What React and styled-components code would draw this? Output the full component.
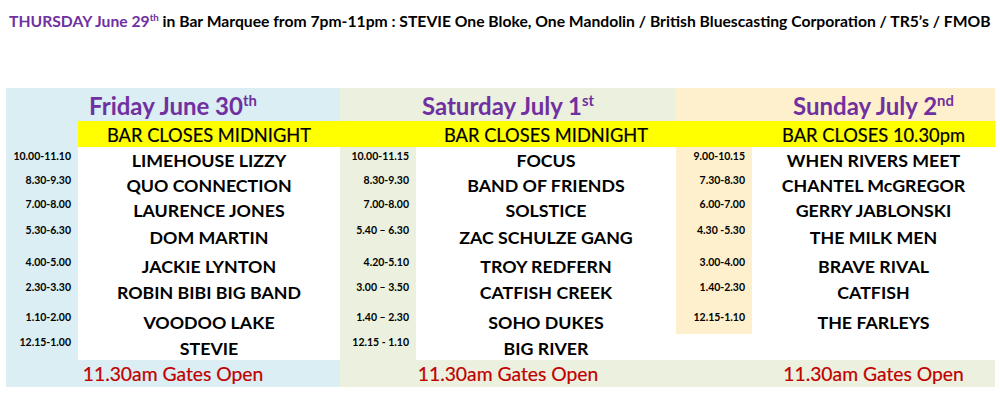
import React from 'react';
import styled, { createGlobalStyle } from 'styled-components';

const ROW_HEIGHTS = [25, 25, 25, 27, 29, 26, 30, 26];
const TIME_OFFSETS = [3, 2, 1, 2, 7, 3, 7, 2];

const GlobalStyle = createGlobalStyle`
  body {
    margin: 0;
    background: #ffffff;
    font-family: Lato, 'Liberation Sans', sans-serif;
    color: #000000;
  }
`;

const Page = styled.div`
  width: 1000px;
  height: 401px;
  padding: 12px 0 0 6px;
  box-sizing: border-box;
`;

const Headline = styled.div`
  padding-left: 3px;
  font-size: 15.7px;
  font-weight: 700;
  line-height: 18px;
  white-space: nowrap;
`;

const Purple = styled.span`
  color: #7030a0;
`;

const Sup = styled.sup`
  font-size: 0.62em;
  line-height: 0;
  vertical-align: 0.6em;
`;

const Schedule = styled.div`
  display: flex;
  margin-top: 58px;
`;

const Day = styled.div`
  display: grid;
  grid-template-columns: ${p => p.$timeWidth}px ${p => p.$bandWidth}px;
  grid-template-rows: 33px 26px ${ROW_HEIGHTS.map(h => h + 'px').join(' ')} 27px;
  background: ${p => p.$bg};
`;

const Title = styled.div`
  grid-column: 1 / -1;
  display: flex;
  align-items: center;
  justify-content: center;
  padding: 2px 0 0 ${p => p.$indent}px;
  font-size: 24px;
  font-weight: 700;
  line-height: 28px;
  color: #7030a0;
`;

const ClosingGap = styled.div`
  background: ${p => (p.$yellow ? '#ffff00' : 'transparent')};
`;

const Closing = styled.div`
  background: #ffff00;
  display: flex;
  align-items: center;
  justify-content: center;
  padding-top: 1px;
  font-size: 18.3px;
  line-height: 20px;
  -webkit-text-stroke: 0.2px #000;
`;

const Time = styled.div`
  padding: ${p => p.$top}px 7px 0 0;
  text-align: right;
  font-size: 10.5px;
  font-weight: 700;
  line-height: 12px;
  white-space: nowrap;
  background: ${p => (p.$blank ? '#ffffff' : 'transparent')};
`;

const Band = styled.div`
  background: #ffffff;
  display: flex;
  align-items: flex-end;
  justify-content: center;
  padding-bottom: 2px;
  font-size: 17.8px;
  font-weight: 700;
  line-height: 20px;
  white-space: nowrap;
`;

const Gates = styled.div`
  grid-column: 1 / -1;
  display: flex;
  align-items: center;
  justify-content: center;
  padding-left: ${p => p.$indent}px;
  background: ${p => p.$bg || 'transparent'};
  color: #c00000;
  font-size: 19.3px;
  line-height: 20px;
  -webkit-text-stroke: 0.2px #c00000;
`;

const days = [
  {
    title: 'Friday June 30',
    sup: 'th',
    bg: '#daeef3',
    timeWidth: 72,
    bandWidth: 262,
    closing: 'BAR CLOSES MIDNIGHT',
    yellowGap: false,
    indent: 0,
    acts: [
      ['10.00-11.10', 'LIMEHOUSE LIZZY'],
      ['8.30-9.30', 'QUO CONNECTION'],
      ['7.00-8.00', 'LAURENCE JONES'],
      ['5.30-6.30', 'DOM MARTIN'],
      ['4.00-5.00', 'JACKIE LYNTON'],
      ['2.30-3.30', 'ROBIN BIBI BIG BAND'],
      ['1.10-2.00', 'VOODOO LAKE'],
      ['12.15-1.00', 'STEVIE'],
    ],
  },
  {
    title: 'Saturday July 1',
    sup: 'st',
    bg: '#ebf1de',
    timeWidth: 76,
    bandWidth: 260,
    closing: 'BAR CLOSES MIDNIGHT',
    yellowGap: true,
    indent: 0,
    acts: [
      ['10.00-11.15', 'FOCUS'],
      ['8.30-9.30', 'BAND OF FRIENDS'],
      ['7.00-8.00', 'SOLSTICE'],
      ['5.40 – 6.30', 'ZAC SCHULZE GANG'],
      ['4.20-5.10', 'TROY REDFERN'],
      ['3.00 – 3.50', 'CATFISH CREEK'],
      ['1.40 – 2.30', 'SOHO DUKES'],
      ['12.15 - 1.10', 'BIG RIVER'],
    ],
  },
  {
    title: 'Sunday July 2',
    sup: 'nd',
    bg: '#fef0cd',
    gatesBg: '#ebf1de',
    timeWidth: 76,
    bandWidth: 243,
    closing: 'BAR CLOSES 10.30pm',
    yellowGap: true,
    indent: 76,
    acts: [
      ['9.00-10.15', 'WHEN RIVERS MEET'],
      ['7.30-8.30', 'CHANTEL McGREGOR'],
      ['6.00-7.00', 'GERRY JABLONSKI'],
      ['4.30 -5.30', 'THE MILK MEN'],
      ['3.00-4.00', 'BRAVE RIVAL'],
      ['1.40-2.30', 'CATFISH'],
      ['12.15-1.10', 'THE FARLEYS'],
      [null, null],
    ],
  },
];

const DayColumn = ({ day }) => (
  <Day $bg={day.bg} $timeWidth={day.timeWidth} $bandWidth={day.bandWidth}>
    <Title $indent={day.indent}>
      <span>
        {day.title}
        <Sup>{day.sup}</Sup>
      </span>
    </Title>
    <ClosingGap $yellow={day.yellowGap} />
    <Closing>{day.closing}</Closing>
    {day.acts.map(([time, band], i) => (
      <React.Fragment key={i}>
        <Time $top={TIME_OFFSETS[i]} $blank={!time}>
          {time}
        </Time>
        <Band>{band}</Band>
      </React.Fragment>
    ))}
    <Gates $indent={day.indent} $bg={day.gatesBg}>
      11.30am Gates Open
    </Gates>
  </Day>
);

const App = () => (
  <>
    <GlobalStyle />
    <Page>
      <Headline>
        <Purple>
          THURSDAY June 29<Sup>th</Sup>
        </Purple>{' '}
        in Bar Marquee from 7pm-11pm : STEVIE One Bloke, One Mandolin / British Bluescasting
        Corporation / TR5’s / FMOB
      </Headline>
      <Schedule>
        {days.map(day => (
          <DayColumn key={day.title} day={day} />
        ))}
      </Schedule>
    </Page>
  </>
);

export default App;
